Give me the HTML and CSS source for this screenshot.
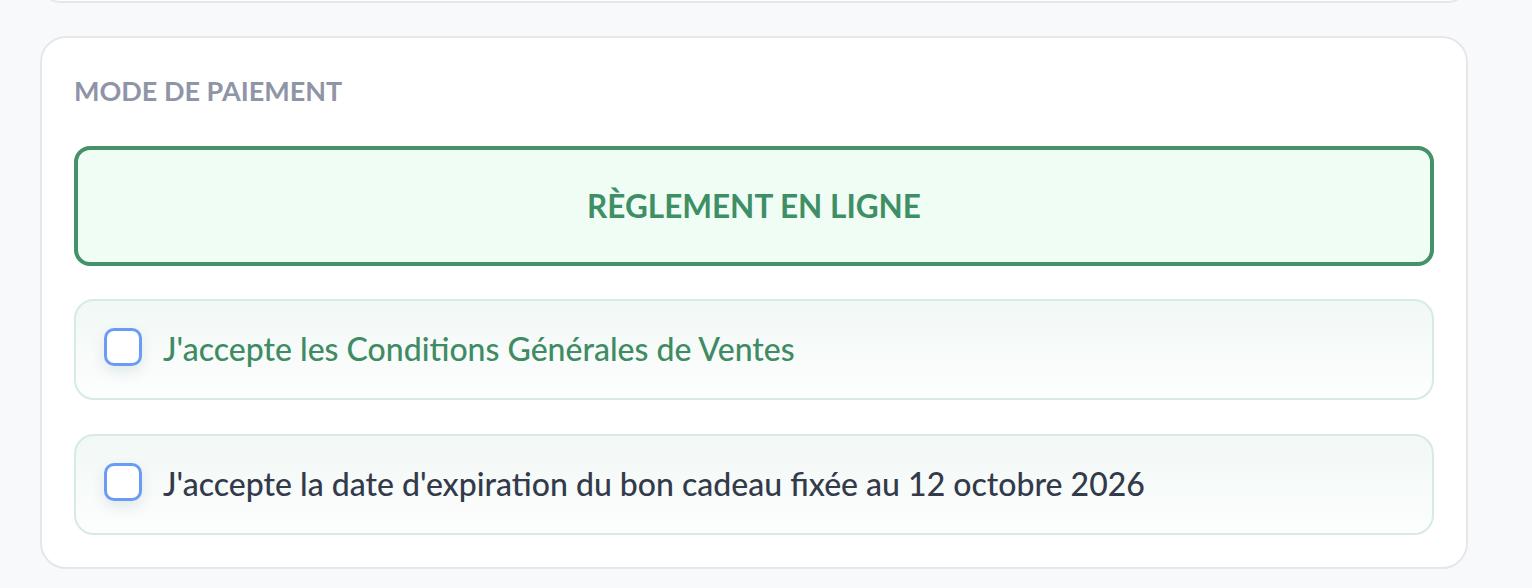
FILE: index.html
```html
<!DOCTYPE html>
<html lang="fr">
<head>
<meta charset="utf-8">
<title>Mode de paiement</title>
<link rel="stylesheet" href="styles.css">
</head>
<body>
<div class="page">
  <div class="card card-prev"></div>
  <section class="card card-pay">
    <h2 class="section-title">MODE DE PAIEMENT</h2>
    <button class="pay-option" type="button">RÈGLEMENT EN LIGNE</button>
    <label class="check-row">
      <span class="checkbox"></span>
      <span class="check-text check-text-green">J'accepte les Conditions Générales de Ventes</span>
    </label>
    <label class="check-row">
      <span class="checkbox"></span>
      <span class="check-text">J'accepte la date d'expiration du bon cadeau fixée au 12 octobre 2026</span>
    </label>
  </section>
</div>
</body>
</html>
```

FILE: styles.css
```css
html, body {
  margin: 0;
  padding: 0;
  background: #f8f9fb;
}
body {
  font-family: "Lato", "Noto Sans", sans-serif;
  overflow: hidden;
}
.page {
  width: 1428px;
  padding-left: 40px;
  display: flex;
  flex-direction: column;
}
.card {
  background: #ffffff;
  border: 2px solid #e5e7eb;
  border-radius: 26px;
  box-sizing: border-box;
}
.card-prev {
  height: 40px;
  margin-top: -37px;
}
.card-pay {
  margin-top: 33px;
  padding: 37px 32px 32px;
  display: flex;
  flex-direction: column;
}
.section-title {
  margin: 0;
  font-size: 27px;
  line-height: 32px;
  font-weight: 700;
  color: #8f95a6;
  letter-spacing: 0;
}
.pay-option {
  margin-top: 39px;
  height: 120px;
  border: 4px solid #44916a;
  border-radius: 16px;
  background: #f0fdf4;
  color: #3f8f66;
  font-family: inherit;
  font-size: 31.5px;
  font-weight: 700;
  padding: 0;
  cursor: pointer;
}
.check-row {
  margin-top: 33px;
  height: 101px;
  box-sizing: border-box;
  border: 2px solid #d6ebe2;
  border-radius: 20px;
  background: linear-gradient(180deg, #f1f8f5 0%, #fdfefe 100%);
  display: flex;
  align-items: center;
  padding-left: 28px;
  gap: 21px;
}
.check-row + .check-row {
  margin-top: 34px;
}
.checkbox {
  width: 38px;
  height: 38px;
  box-sizing: border-box;
  border: 3.5px solid #6b9cf5;
  border-radius: 10px;
  background: #ffffff;
  box-shadow: 0 6px 14px rgba(60, 80, 110, 0.12);
  flex: none;
  margin-top: -5px;
}
.check-text {
  font-size: 32px;
  font-weight: 500;
  color: #333a4a;
  margin-top: -3px;
}
.check-text-green {
  color: #3f8b63;
}
```
